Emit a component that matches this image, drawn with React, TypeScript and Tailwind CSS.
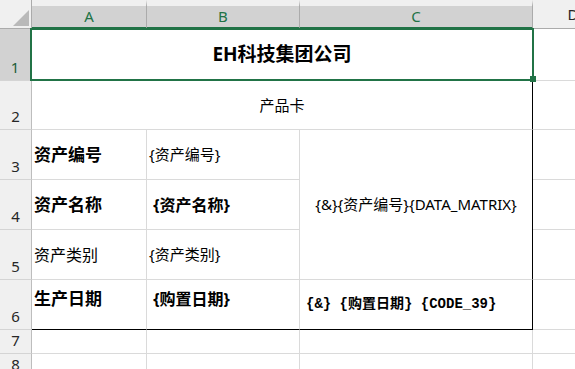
import React from "react";

const grid = "border-r border-b border-[#dadada]";
const rh = "flex items-end justify-center pb-[3px] bg-[#f0f0f0] border-r border-r-[#bdbdbd] border-b border-b-[#d4d4d4] text-[15px] leading-[20px] text-[#262626]";
const cjk = "font-['Noto_Sans','Noto_Sans_CJK_SC',sans-serif] text-black";
const colHead = "flex items-center justify-center bg-[#d2d2d2] border-t-[6px] border-t-[#f0f0f0] border-r border-r-[#ababab] border-b-2 border-b-[#217346] text-[15px] text-[#217346]";

export default function App() {
  return (
    <div className="w-[575px] h-[369px] overflow-hidden bg-white font-['Noto_Sans','Noto_Sans_CJK_SC',sans-serif]">
      <div className="grid grid-cols-[32px_115px_153px_233px_80px] grid-rows-[29px_52px_49px_50px_50px_50px_50px_24px_24px]">
        {/* header row */}
        <div className="relative bg-[#f0f0f0] border-r border-r-[#ababab] border-b border-b-[#ababab]">
          <svg className="absolute left-[13px] top-[10px]" width="16" height="16" viewBox="0 0 16 16">
            <polygon points="16,0 16,16 0,16" fill="#b9b9b9" />
          </svg>
        </div>
        <div className={colHead}>A</div>
        <div className={colHead}>B</div>
        <div className={colHead}>C</div>
        <div className="flex items-center justify-center bg-[#f0f0f0] border-b border-b-[#ababab] text-[15px] text-[#262626]">D</div>

        {/* row 1 */}
        <div className="flex items-end justify-center pb-[3px] bg-[#d2d2d2] border-r-2 border-r-[#217346] border-b border-b-[#d4d4d4] text-[15px] leading-[20px] text-[#1d5e3a]">1</div>
        <div className={`col-span-3 relative flex items-center justify-center ${grid} ${cjk} text-[19px] font-bold`}>
          EH科技集团公司
          <div className="absolute -left-[2px] -top-[1px] w-[504px] h-[53px] border-2 border-[#217346] z-10 pointer-events-none" />
          <div className="absolute left-[498px] top-[47px] w-[6px] h-[6px] bg-[#217346] z-20" />
        </div>
        <div className={grid} />

        {/* row 2 */}
        <div className={rh}>2</div>
        <div className={`col-span-3 flex items-center justify-center border-b border-b-[#dadada] border-r border-r-black ${cjk} text-[15px]`}>产品卡</div>
        <div className={grid} />

        {/* row 3 */}
        <div className={rh}>3</div>
        <div className={`flex items-center pl-[2px] ${grid} ${cjk} text-[17px] font-bold`}>资产编号</div>
        <div className={`flex items-center pl-[2px] ${grid} ${cjk} text-[15px]`}>{"{资产编号}"}</div>
        <div className={`row-span-3 flex items-center justify-center border-b border-b-[#dadada] border-r border-r-black ${cjk} text-[15px]`}>{"{&}{资产编号}{DATA_MATRIX}"}</div>
        <div className={grid} />

        {/* row 4 */}
        <div className={rh}>4</div>
        <div className={`flex items-center pl-[2px] ${grid} ${cjk} text-[17px] font-bold`}>资产名称</div>
        <div className={`flex items-center pl-[2px] whitespace-pre ${grid} ${cjk} text-[16px] font-bold`}>{" {资产名称}"}</div>
        <div className={grid} />

        {/* row 5 */}
        <div className={rh}>5</div>
        <div className={`flex items-center pl-[2px] ${grid} ${cjk} text-[16px]`}>资产类别</div>
        <div className={`flex items-center pl-[2px] ${grid} ${cjk} text-[15px]`}>{"{资产类别}"}</div>
        <div className={grid} />

        {/* row 6 */}
        <div className={rh}>6</div>
        <div className={`flex items-center pl-[2px] pb-[12px] border-r border-r-[#dadada] border-b border-b-black ${cjk} text-[17px] font-bold`}>生产日期</div>
        <div className={`flex items-center pl-[2px] pb-[12px] whitespace-pre border-r border-r-[#dadada] border-b border-b-black ${cjk} text-[16px] font-bold`}>{" {购置日期}"}</div>
        <div className="flex items-center pl-[6px] whitespace-pre border-r border-r-black border-b border-b-black font-['Liberation_Mono','Noto_Sans_CJK_SC',monospace] text-[14px] font-bold text-black">{"{&} {购置日期} {CODE_39}"}</div>
        <div className={grid} />

        {/* row 7 */}
        <div className={rh}>7</div>
        <div className={grid} />
        <div className={grid} />
        <div className={grid} />
        <div className={grid} />

        {/* row 8 */}
        <div className={rh}>8</div>
        <div className={grid} />
        <div className={grid} />
        <div className={grid} />
        <div className={grid} />
      </div>
    </div>
  );
}
